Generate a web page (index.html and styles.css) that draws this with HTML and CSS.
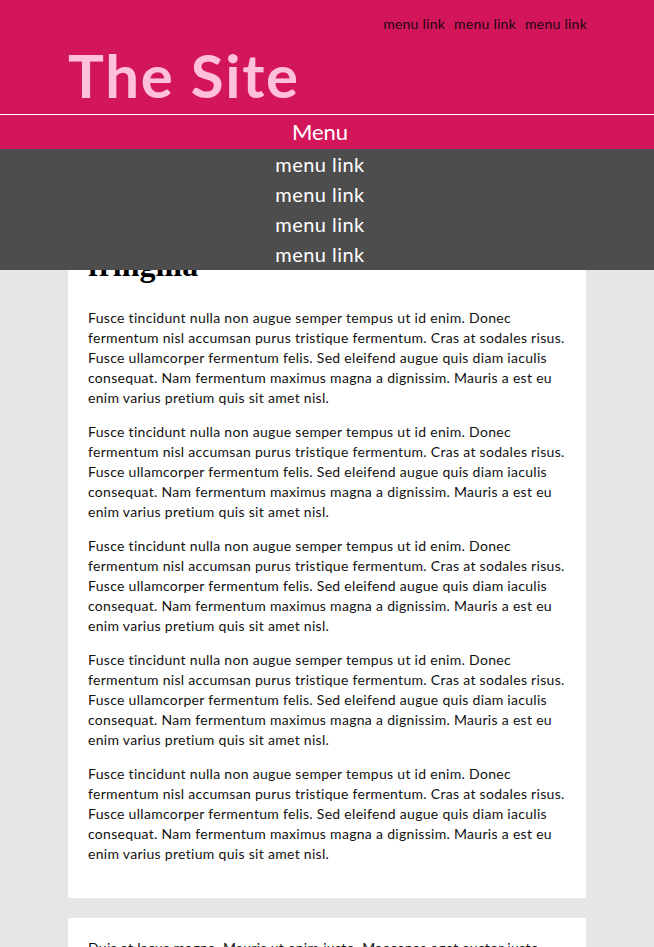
FILE: index.html
```html
<!DOCTYPE html>
<html lang="en">
<head>
<meta charset="utf-8">
<title>The Site</title>
<link rel="stylesheet" href="styles.css">
</head>
<body>
<header class="site-header">
  <div class="header-inner">
    <nav class="top-links">
      <a href="#">menu link</a>
      <a href="#">menu link</a>
      <a href="#">menu link</a>
    </nav>
    <div class="site-title">The Site</div>
  </div>
</header>
<nav class="menu-bar">
  <div class="menu-toggle">Menu</div>
  <ul class="dropdown">
    <li><a href="#">menu link</a></li>
    <li><a href="#">menu link</a></li>
    <li><a href="#">menu link</a></li>
    <li><a href="#">menu link</a></li>
  </ul>
</nav>
<main class="content">
  <article class="card">
    <h1 class="card-title">Aenean vitae lorem<br>fringilla</h1>
    <p>Fusce tincidunt nulla non augue semper tempus ut id enim. Donec fermentum nisl accumsan purus tristique fermentum. Cras at sodales risus. Fusce ullamcorper fermentum felis. Sed eleifend augue quis diam iaculis consequat. Nam fermentum maximus magna a dignissim. Mauris a est eu enim varius pretium quis sit amet nisl.</p>
    <p>Fusce tincidunt nulla non augue semper tempus ut id enim. Donec fermentum nisl accumsan purus tristique fermentum. Cras at sodales risus. Fusce ullamcorper fermentum felis. Sed eleifend augue quis diam iaculis consequat. Nam fermentum maximus magna a dignissim. Mauris a est eu enim varius pretium quis sit amet nisl.</p>
    <p>Fusce tincidunt nulla non augue semper tempus ut id enim. Donec fermentum nisl accumsan purus tristique fermentum. Cras at sodales risus. Fusce ullamcorper fermentum felis. Sed eleifend augue quis diam iaculis consequat. Nam fermentum maximus magna a dignissim. Mauris a est eu enim varius pretium quis sit amet nisl.</p>
    <p>Fusce tincidunt nulla non augue semper tempus ut id enim. Donec fermentum nisl accumsan purus tristique fermentum. Cras at sodales risus. Fusce ullamcorper fermentum felis. Sed eleifend augue quis diam iaculis consequat. Nam fermentum maximus magna a dignissim. Mauris a est eu enim varius pretium quis sit amet nisl.</p>
    <p>Fusce tincidunt nulla non augue semper tempus ut id enim. Donec fermentum nisl accumsan purus tristique fermentum. Cras at sodales risus. Fusce ullamcorper fermentum felis. Sed eleifend augue quis diam iaculis consequat. Nam fermentum maximus magna a dignissim. Mauris a est eu enim varius pretium quis sit amet nisl.</p>
  </article>
  <article class="card">
    <p>Duis at lacus magna. Mauris ut enim justo. Maecenas eget auctor justo. Fusce tincidunt nulla non augue semper tempus ut id enim. Donec fermentum nisl accumsan purus tristique fermentum.</p>
  </article>
</main>
</body>
</html>
```
FILE: styles.css
```css
* { box-sizing: border-box; }

body {
  margin: 0;
  background: #e6e6e6;
  font-family: "Lato", "Open Sans", sans-serif;
  color: #111;
}

a { text-decoration: none; color: inherit; }

.site-header {
  background: #d3165a;
  border-bottom: 1px solid #fff;
  height: 115px;
}

.header-inner {
  width: 518px;
  margin: 0 auto;
  display: flex;
  flex-direction: column;
}

.top-links {
  display: flex;
  justify-content: flex-end;
  gap: 9px;
  padding-top: 14px;
  margin-right: -1px;
  font-size: 14px;
  line-height: 20px;
  letter-spacing: 0.25px;
}

.top-links a { color: #1a0510; }

.site-title {
  margin-top: 9px;
  font-size: 60px;
  line-height: 64px;
  font-weight: 700;
  letter-spacing: 1.7px;
  color: #ffc0da;
}

.menu-bar {
  position: relative;
  background: #d3165a;
}

.menu-toggle {
  height: 34px;
  line-height: 34px;
  text-align: center;
  padding-right: 14px;
  font-size: 22px;
  color: #fff;
}

.dropdown {
  position: absolute;
  top: 100%;
  left: 0;
  right: 0;
  margin: 0;
  padding: 0 14px 1px 0;
  list-style: none;
  background: #4d4d4d;
  text-align: center;
  z-index: 10;
}

.dropdown li {
  line-height: 30px;
  font-size: 20px;
  letter-spacing: 0.45px;
}

.dropdown a { color: #fff; }

.content {
  width: 518px;
  margin: 20px auto 0;
  display: flex;
  flex-direction: column;
  gap: 20px;
}

.card {
  background: #fff;
  padding: 20px;
}

.card-title {
  margin: 21px 0 24px;
  font-family: "Liberation Serif", serif;
  font-size: 32px;
  line-height: 37px;
  font-weight: 700;
  color: #000;
}

.card p {
  margin: 0 0 14px;
  font-size: 14px;
  line-height: 20px;
  letter-spacing: 0.3px;
}
```
